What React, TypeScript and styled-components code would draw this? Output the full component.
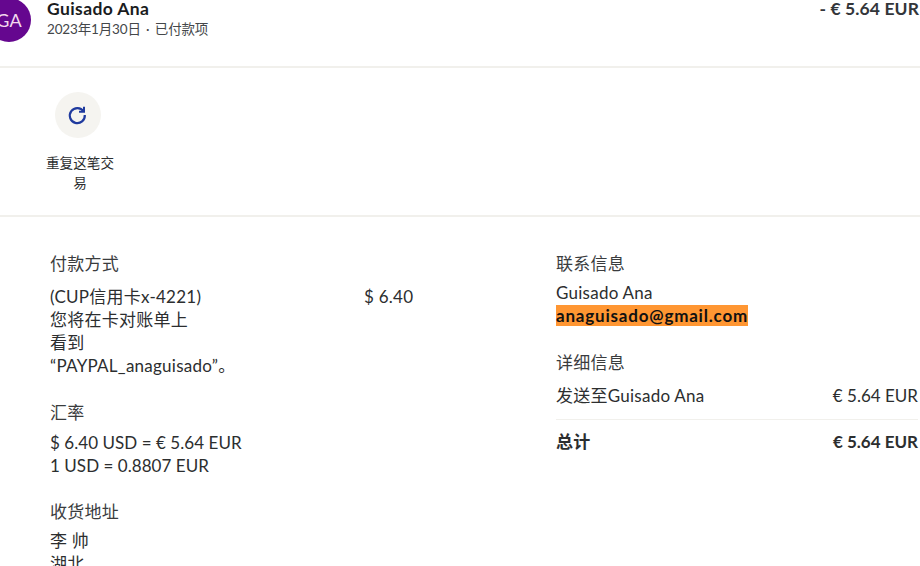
import React from "react";
import styled, { createGlobalStyle } from "styled-components";

const Global = createGlobalStyle`
  html, body { margin: 0; padding: 0; background: #fff; }
  body { width: 920px; height: 566px; overflow: hidden; }
  #root { width: 920px; height: 566px; overflow: hidden; }
`;

const Page = styled.div`
  width: 920px;
  font-family: Lato, "Noto Sans CJK SC", sans-serif;
  color: #2c2e2f;
  font-size: 17px;
  letter-spacing: 0.25px;
  line-height: 23px;
`;

const Header = styled.header`
  display: flex;
  justify-content: space-between;
  height: 69px;
  margin-top: -3px;
  padding-right: 1px;
  border-bottom: 2px solid #f1f0ec;
`;

const Identity = styled.div`
  display: flex;
  gap: 16px;
  margin-left: -13px;
`;

const Avatar = styled.div`
  width: 44px;
  height: 44px;
  margin-top: 1px;
  border-radius: 50%;
  background: #65078f;
  color: #f3d9ee;
  font-size: 18px;
  display: flex;
  align-items: center;
  justify-content: center;
`;

const Name = styled.div`
  font-size: 17.5px;
  font-weight: 700;
  letter-spacing: 0.4px;
  line-height: 20px;
  color: #1a1c1e;
  margin-top: 2px;
`;

const Meta = styled.div`
  font-size: 13.5px;
  letter-spacing: -0.15px;
  word-spacing: 2px;
  line-height: 20px;
  color: #44474a;
`;

const Total = styled.div`
  font-size: 17.5px;
  font-weight: 700;
  letter-spacing: 0.1px;
  line-height: 20px;
  margin-top: 2px;
  color: #33363a;
`;

const Actions = styled.section`
  height: 149px;
  box-sizing: border-box;
  border-bottom: 2px solid #f1f0ec;
  padding: 24px 0 0 45px;
`;

const Action = styled.div`
  width: 70px;
  display: flex;
  flex-direction: column;
`;

const ActionCircle = styled.div`
  width: 46px;
  height: 46px;
  margin-left: 10px;
  border-radius: 50%;
  background: #f5f4f0;
  display: flex;
  align-items: center;
  justify-content: center;
  color: #1f3a9e;
`;

const ActionLabel = styled.div`
  margin-top: 16px;
  font-size: 13.6px;
  letter-spacing: 0;
  line-height: 19.5px;
  text-align: center;
  color: #2c2e2f;
`;

const Details = styled.section`
  display: flex;
  padding: 35px 2px 0 50px;
`;

const LeftColumn = styled.div`
  width: 362px;
  margin-right: 144px;
`;

const RightColumn = styled.div`
  flex: 1;
`;

const Block = styled.div<{ $gap?: number }>`
  margin-bottom: ${(p) => p.$gap ?? 24}px;
`;

const Heading = styled.div<{ $gap?: number }>`
  line-height: 23px;
  margin-bottom: ${(p) => p.$gap ?? 7}px;
  color: #3a3c3e;
`;

const Row = styled.div`
  display: flex;
  justify-content: space-between;
`;

const PaymentText = styled.div`
  width: 150px;
`;

const Amount = styled.div`
  width: 48px;
  white-space: nowrap;
`;

const Email = styled.span`
  background: #ff9632;
  font-weight: 700;
  letter-spacing: 0.8px;
  color: #111;
`;

const Divider = styled.div`
  height: 1px;
  background: #f1f0ec;
  margin: 12px 0 10px;
`;

const TotalRow = styled(Row)`
  font-weight: 700;
`;

const Line = styled.div`
  white-space: nowrap;
`;

const RateLine = styled(Line)`
  letter-spacing: 0.05px;
`;

const Money = styled.span`
  letter-spacing: 0;
`;

const App: React.FC = () => (
  <Page>
    <Global />
    <Header>
      <Identity>
        <Avatar>GA</Avatar>
        <div>
          <Name>Guisado Ana</Name>
          <Meta>2023年1月30日 · 已付款项</Meta>
        </div>
      </Identity>
      <Total>- € 5.64 EUR</Total>
    </Header>
    <Actions>
      <Action>
        <ActionCircle>
          <svg width="24" height="24" viewBox="0 0 24 24" fill="none" stroke="currentColor" strokeWidth="2.2">
            <path d="M17.6 8.5A7.5 7.5 0 1 0 18.8 12" />
            <path d="M18 3.8v5h-5" strokeWidth="2" />
          </svg>
        </ActionCircle>
        <ActionLabel>重复这笔交易</ActionLabel>
      </Action>
    </Actions>
    <Details>
      <LeftColumn>
        <Block>
          <Heading $gap={10}>付款方式</Heading>
          <Row>
            <PaymentText>
              <Line>(CUP信用卡x-4221)</Line>
              <Line>您将在卡对账单上</Line>
              <Line>看到</Line>
              <Line>“PAYPAL_anaguisado”。</Line>
            </PaymentText>
            <Amount>$ 6.40</Amount>
          </Row>
        </Block>
        <Block $gap={23}>
          <Heading>汇率</Heading>
          <RateLine>$ 6.40 USD = € 5.64 EUR</RateLine>
          <RateLine>1 USD = 0.8807 EUR</RateLine>
        </Block>
        <Block>
          <Heading $gap={6}>收货地址</Heading>
          <Line>李 帅</Line>
          <Line>湖北</Line>
        </Block>
      </LeftColumn>
      <RightColumn>
        <Block>
          <Heading $gap={6}>联系信息</Heading>
          <Line>Guisado Ana</Line>
          <Line><Email>anaguisado@gmail.com</Email></Line>
        </Block>
        <Block>
          <Heading $gap={10}>详细信息</Heading>
          <Row>
            <span>发送至Guisado Ana</span>
            <Money>€ 5.64 EUR</Money>
          </Row>
          <Divider />
          <TotalRow>
            <span>总计</span>
            <Money>€ 5.64 EUR</Money>
          </TotalRow>
        </Block>
      </RightColumn>
    </Details>
  </Page>
);

export default App;
